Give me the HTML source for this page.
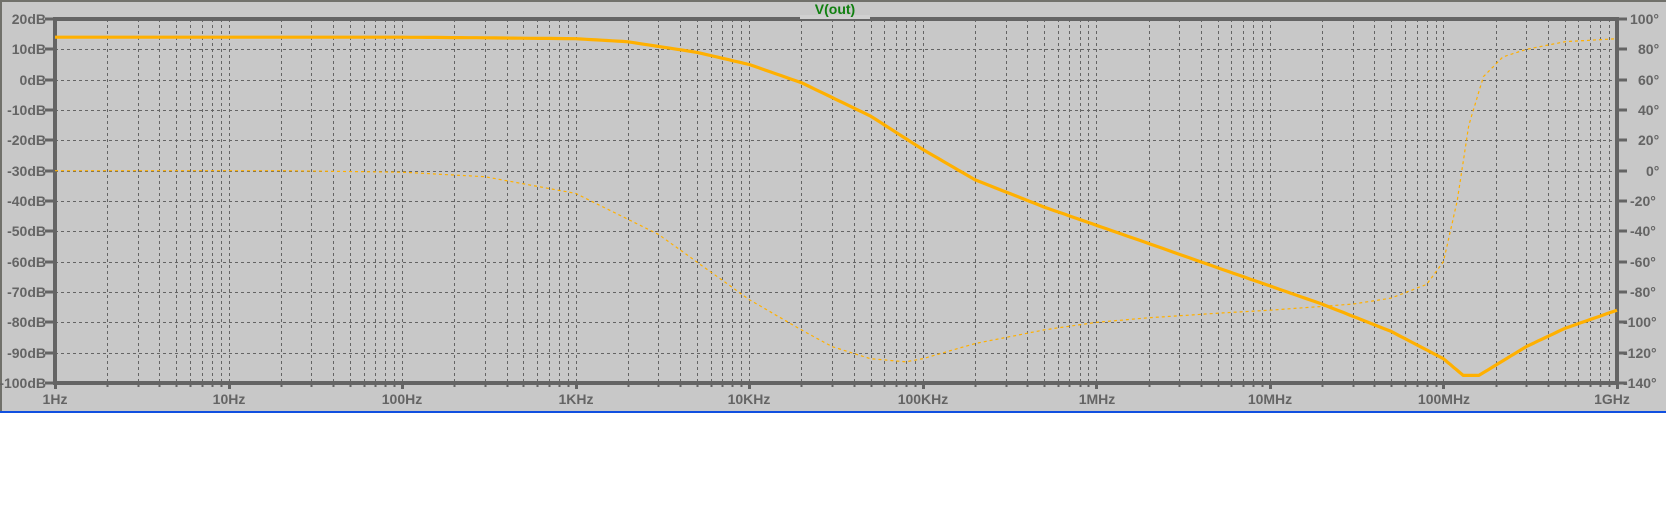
<!DOCTYPE html>
<html><head><meta charset="utf-8"><style>
html,body{margin:0;padding:0;background:#fff;width:1666px;height:525px;overflow:hidden}
svg{display:block}
text{font-family:"Liberation Sans",sans-serif;font-weight:bold;font-size:14px;fill:#646464}
</style></head><body>
<svg id="s" width="1666" height="525" xmlns="http://www.w3.org/2000/svg">
<rect x="0" y="0" width="1666" height="411" fill="#c8c8c8"/>
<rect x="0" y="0" width="1666" height="2" fill="#70706a"/>
<rect x="0" y="0" width="2" height="411" fill="#70706a"/>
<rect x="0" y="411" width="1666" height="2" fill="#1050e0"/>
<g id="grid"></g>
<rect x="53" y="17" width="1566" height="4" fill="#646464"/>
<rect x="53" y="17" width="4" height="368" fill="#646464"/>
<rect x="1615" y="17" width="4" height="368" fill="#646464"/>
<rect x="53" y="381" width="1566" height="4" fill="#646464"/>
<rect x="800" y="15" width="70" height="4" fill="#d0d0d0"/>
<text x="835" y="14" text-anchor="middle" style="fill:#108010;font-size:14px">V(out)</text>
<g id="ticks"></g>
<g text-anchor="end">
<text x="46" y="24">20dB</text><text x="46" y="54">10dB</text><text x="46" y="85">0dB</text>
<text x="46" y="115">-10dB</text><text x="46" y="145">-20dB</text><text x="46" y="176">-30dB</text>
<text x="46" y="206">-40dB</text><text x="46" y="236">-50dB</text><text x="46" y="267">-60dB</text>
<text x="46" y="297">-70dB</text><text x="46" y="327">-80dB</text><text x="46" y="358">-90dB</text>
<text x="46" y="388">-100dB</text>
</g>
<g>
<text x="1630" y="24">100°</text><text x="1638" y="54">80°</text><text x="1638" y="85">60°</text>
<text x="1638" y="115">40°</text><text x="1638" y="145">20°</text><text x="1646" y="176">0°</text>
<text x="1630" y="206">-20°</text><text x="1630" y="236">-40°</text><text x="1630" y="267">-60°</text>
<text x="1630" y="297">-80°</text><text x="1623" y="327">-100°</text><text x="1623" y="358">-120°</text>
<text x="1623" y="388">-140°</text>
</g>
<g text-anchor="middle">
<text x="55" y="404">1Hz</text><text x="229" y="404">10Hz</text><text x="402" y="404">100Hz</text>
<text x="576" y="404">1KHz</text><text x="749" y="404">10KHz</text><text x="923" y="404">100KHz</text>
<text x="1097" y="404">1MHz</text><text x="1270" y="404">10MHz</text><text x="1444" y="404">100MHz</text>
<text x="1612" y="404">1GHz</text>
</g>
<polyline id="ph" fill="none" stroke="#ffb000" stroke-width="1.2" stroke-dasharray="3,3"/>
<polyline id="mag" fill="none" stroke="#ffb000" stroke-width="3.2" stroke-linejoin="round"/>
</svg>
<script>
var NS="http://www.w3.org/2000/svg";
var L=55,R=1617,T=19,B=383,D=(R-L)/9;
function X(f){return L+D*Math.log10(f);}
function Ydb(d){return T+(20-d)*(B-T)/120;}
function Yph(p){return T+(100-p)*(B-T)/240;}
var g=document.getElementById("grid"),tk=document.getElementById("ticks");
function ln(p,x1,y1,x2,y2,c,w,da){var e=document.createElementNS(NS,"line");e.setAttribute("x1",x1);e.setAttribute("y1",y1);e.setAttribute("x2",x2);e.setAttribute("y2",y2);e.setAttribute("stroke",c);e.setAttribute("stroke-width",w);if(da)e.setAttribute("stroke-dasharray",da);p.appendChild(e);}
for(var d=0;d<9;d++)for(var m=1;m<=10;m++){if(d>0&&m==1)continue;var x=Math.round(X(m*Math.pow(10,d)))+0.5;
 if(!(d==0&&m==1)&&!(d==8&&m==10)) ln(g,x,T,x,B,"#646464",1,"3,3");
 ln(tk,x,B,x,B+(m==1||m==10?6:4),"#646464",m==1||m==10?3:2);}
for(var i=1;i<12;i++){var y=Math.round(T+i*(B-T)/12)+0.5;ln(g,L,y,R,y,"#646464",1,"3,3");}
for(var i=0;i<=12;i++){var y=Math.round(T+i*(B-T)/12);ln(tk,45,y,55,y,"#646464",3);ln(tk,R,y,R+10,y,"#646464",3);}
function interp(pts){var o=[];for(var i=0;i<pts.length-1;i++){var a=pts[i],b=pts[i+1];var la=Math.log10(a[0]),lb=Math.log10(b[0]);for(var k=0;k<10;k++){var t=k/10;o.push([Math.pow(10,la+(lb-la)*t),a[1]+(b[1]-a[1])*t]);}}o.push(pts[pts.length-1]);return o;}
var mag=[[1,14],[100,14],[300,13.8],[1e3,13.5],[2e3,12.5],[5e3,9],[1e4,5],[2e4,-1],[5e4,-12],[1e5,-23],[2e5,-33],[5e5,-42],[1e6,-48],[2e6,-54],[5e6,-62],[1e7,-68],[2e7,-74],[5e7,-83],[1e8,-92],[1.3e8,-97.5],[1.6e8,-97.5],[3e8,-88],[5e8,-82],[1e9,-76]];
var ph=[[1,0],[20,0],[100,-1],[300,-4],[1e3,-15],[3e3,-42],[1e4,-85],[2e4,-105],[3e4,-116],[5e4,-124],[8e4,-126],[1e5,-124],[2e5,-114],[5e5,-105],[1e6,-100],[2e6,-97],[5e6,-94],[1e7,-92],[3e7,-88],[5e7,-84],[8e7,-75],[1e8,-60],[1.2e8,-20],[1.4e8,30],[1.7e8,62],[2.2e8,75],[3e8,80],[5e8,85],[1e9,87]];
document.getElementById("mag").setAttribute("points",interp(mag).map(function(p){return X(p[0]).toFixed(1)+","+Ydb(p[1]).toFixed(1)}).join(" "));
document.getElementById("ph").setAttribute("points",interp(ph).map(function(p){return X(p[0]).toFixed(1)+","+Yph(p[1]).toFixed(1)}).join(" "));
</script>
</body></html>
